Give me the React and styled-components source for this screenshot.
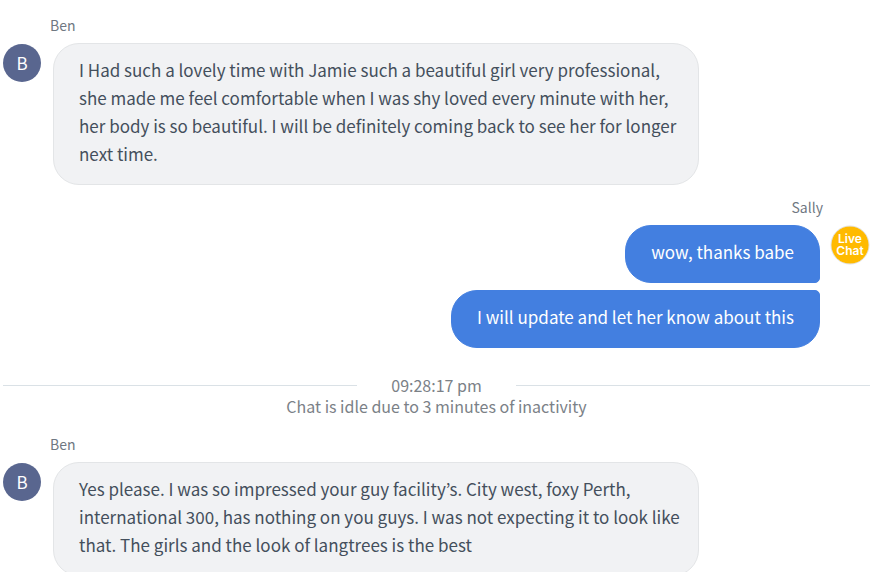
import React from 'react';
import styled, { createGlobalStyle } from 'styled-components';

const GlobalStyle = createGlobalStyle`
  * {
    box-sizing: border-box;
  }
  body {
    margin: 0;
    background: #fff;
    font-family: "Noto Sans CJK KR", "Noto Sans", sans-serif;
  }
`
const Chat = styled.main`
  display: flex;
  flex-direction: column;
  height: 100vh;
  padding: 15px 10px 0 3px;
  overflow-y: auto;
  scrollbar-width: none;
`
const Group = styled.section`
  flex: none;
  margin-bottom: ${({ $gap }) => $gap}px;
`
const Name = styled.p`
  margin: 0 47px 8px;
  font-size: 14px;
  line-height: 20px;
  color: #6f7882;
  text-align: ${({ $own }) => ($own ? 'right' : 'left')};
`
const Row = styled.div`
  display: flex;
  flex-direction: ${({ $own }) => ($own ? 'row-reverse' : 'row')};
  align-items: flex-start;
  gap: ${({ $own }) => ($own ? 10 : 12)}px;
`
const Avatar = styled.div`
  flex: none;
  width: 38px;
  height: 38px;
  margin-top: 1px;
  border-radius: 50%;
  background: #59668f;
  color: #fff;
  font-size: 17px;
  line-height: 38px;
  text-align: center;
`
const Logo = styled.svg`
  flex: none;
  width: 40px;
  height: 40px;
  font-family: Inter, sans-serif;
  font-weight: 600;
`
const Bubbles = styled.div`
  display: flex;
  flex-direction: column;
  align-items: ${({ $own }) => ($own ? 'flex-end' : 'flex-start')};
  gap: 7px;
  max-width: calc(100% - 221px);
`
const Bubble = styled.p`
  margin: 0;
  padding: 12px 15px 16px 25px;
  font-size: 17px;
  line-height: 28px;
  border: 1px solid #e3e5e7;
  border-radius: 26px;
  background: #f1f2f4;
  color: #444f5c;
`
const OwnBubble = styled(Bubble)`
  padding: 12px 25px 16px;
  border-color: #437fe0;
  background: #437fe0;
  color: #fff;
  &:not(:last-child) {
    border-bottom-right-radius: 5px;
  }
  &:not(:first-child) {
    border-top-right-radius: 5px;
  }
`
const Notice = styled.div`
  flex: none;
  margin-bottom: 17px;
  font-size: 16px;
  line-height: 21px;
  text-align: center;
  color: #7b8187;
`
const Time = styled.div`
  display: flex;
  align-items: center;
  gap: 34px;
  &::before,
  &::after {
    content: '';
    flex: 1;
    height: 1px;
    background: #dae1e6;
  }
`

const LiveChatLogo = () => (
  <Logo viewBox='0 0 40 40' role='img' aria-label='Live Chat'>
    <circle cx='20' cy='20' r='19' fill='#fff' stroke='#dcdfe6' />
    <circle cx='20' cy='20' r='18.6' fill='#ffba00' />
    <text x='20' y='18' fontSize='12' fill='#fff' textAnchor='middle'>Live</text>
    <text x='20' y='30' fontSize='12' fill='#fff' textAnchor='middle'>Chat</text>
  </Logo>
)

const Messages = ({ name, own, gap, messages }) => {
  const Item = own ? OwnBubble : Bubble;

  return (
    <Group $gap={gap}>
      <Name $own={own}>{name}</Name>
      <Row $own={own}>
        {own ? <LiveChatLogo /> : <Avatar>{name[0]}</Avatar>}
        <Bubbles $own={own}>
          {messages.map((message) => (
            <Item key={message}>{message}</Item>
          ))}
        </Bubbles>
      </Row>
    </Group>
  );
}

const App = () => (
  <>
    <GlobalStyle />
    <Chat>
      <Messages
        name='Ben'
        gap={12}
        messages={[
          'I Had such a lovely time with Jamie such a beautiful girl very professional, she made me feel comfortable when I was shy loved every minute with her, her body is so beautiful. I will be definitely coming back to see her for longer next time.',
        ]}
      />
      <Messages
        name='Sally'
        own
        gap={27}
        messages={['wow, thanks babe', 'I will update and let her know about this']}
      />
      <Notice>
        <Time>09:28:17 pm</Time>
        Chat is idle due to 3 minutes of inactivity
      </Notice>
      <Messages
        name='Ben'
        gap={16}
        messages={[
          'Yes please. I was so impressed your guy facility’s. City west, foxy Perth, international 300, has nothing on you guys. I was not expecting it to look like that. The girls and the look of langtrees is the best',
        ]}
      />
    </Chat>
  </>
)

export default App
